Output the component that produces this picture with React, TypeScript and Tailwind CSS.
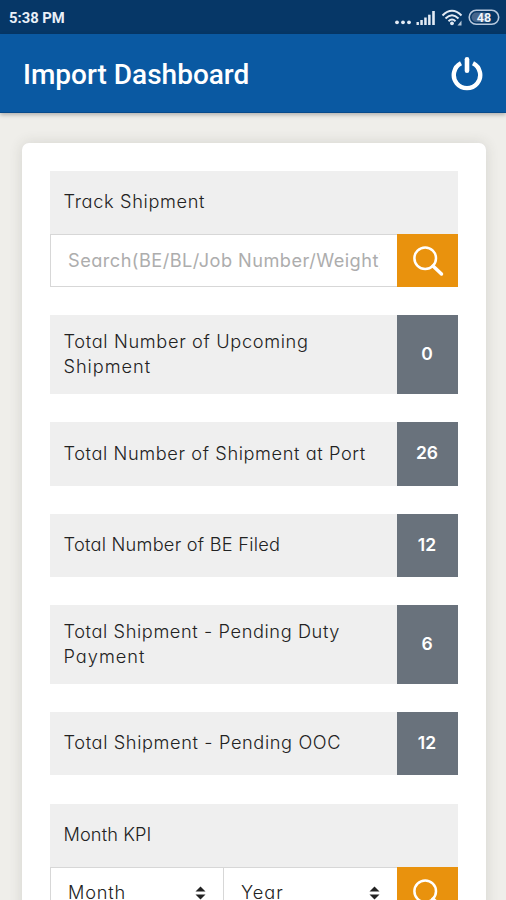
import React from "react";

type Line = { text: string; tracking: string };
type Metric = { lines: Line[]; value: string; box: string };

const metrics: Metric[] = [
  {
    lines: [
      { text: "Total Number of Upcoming", tracking: "tracking-[0.66px]" },
      { text: "Shipment", tracking: "tracking-[0.95px]" },
    ],
    value: "0",
    box: "mt-[28px] h-[79px]",
  },
  { lines: [{ text: "Total Number of Shipment at Port", tracking: "tracking-[0.6px]" }], value: "26", box: "mt-[28px] h-[64px]" },
  { lines: [{ text: "Total Number of BE Filed", tracking: "tracking-[0.25px]" }], value: "12", box: "mt-[28px] h-[63px]" },
  {
    lines: [
      { text: "Total Shipment - Pending Duty", tracking: "tracking-[0.6px]" },
      { text: "Payment", tracking: "tracking-[1px]" },
    ],
    value: "6",
    box: "mt-[28px] h-[79px]",
  },
  { lines: [{ text: "Total Shipment - Pending OOC", tracking: "tracking-[0.62px]" }], value: "12", box: "mt-[28px] h-[63px]" },
];

function StatusIcons() {
  return (
    <svg className="mt-[2px]" width="108" height="20" viewBox="0 0 108 20" fill="none">
      <g fill="#e3ebf5">
        <circle cx="5" cy="14.3" r="1.9" />
        <circle cx="11" cy="14.3" r="1.9" />
        <circle cx="17" cy="14.3" r="1.9" />
        <rect x="24.5" y="14" width="2.4" height="3" />
        <rect x="28.3" y="12" width="2.5" height="5" />
        <rect x="32.2" y="9.5" width="2.5" height="7.5" />
        <rect x="36.1" y="6.7" width="2.5" height="10.3" />
        <rect x="40.2" y="3" width="2.6" height="14" />
        <circle cx="60" cy="15.3" r="1.9" />
        <path d="M69.5 12.5V17.5H65.5Z" opacity="0.8" />
      </g>
      <g stroke="#e3ebf5" strokeWidth="2">
        <path d="M50.500 7.500Q60 -2 69.500 7.500" />
        <path d="M53.500 10.500Q60 4 66.500 10.500" />
        <path d="M56.500 13.200Q60 9.800 63.500 13.200" />
      </g>
      <rect x="77.200" y="2.300" width="29.500" height="14" rx="7" stroke="#b9c9de" strokeWidth="1.600" />
      <rect x="79.500" y="4.500" width="17" height="9.600" rx="4.800" fill="#47668c" />
      <text x="92" y="13.700" textAnchor="middle" fontFamily="Roboto, sans-serif" fontSize="12.500" fontWeight="700" fill="#f0f5fc">48</text>
    </svg>
  );
}

function PowerIcon() {
  return (
    <svg className="mt-[2px]" width="32" height="34" viewBox="0 0 32 34" fill="none" stroke="#fff">
      <path d="M10 6.200A13.200 13.200 0 1 0 22 6.200" strokeWidth="4.400" />
      <path d="M16 2.300V13.700" strokeWidth="4.600" strokeLinecap="round" />
    </svg>
  );
}

function SearchButton() {
  return (
    <button className="flex w-[61px] shrink-0 items-center justify-center bg-[#e9920d]">
      <svg width="32" height="32" viewBox="0 0 32 32" fill="none" stroke="#fff">
        <circle cx="13.200" cy="13.200" r="10.800" strokeWidth="2.500" />
        <path d="M21 21L29.500 29" strokeWidth="3.500" strokeLinecap="round" />
      </svg>
    </button>
  );
}

function Sorter() {
  return (
    <svg width="11" height="14" viewBox="0 0 11 14" fill="#222">
      <path d="M0.500 5.500L5.500 0.500L10.500 5.500Z" />
      <path d="M0.500 8.500L5.500 13.500L10.500 8.500Z" />
    </svg>
  );
}

function SectionTitle({ children, className }: { children: string; className: string }) {
  return <h2 className={"flex h-[63px] items-center bg-[#efefef] pb-[2px] pl-[13.5px] " + className}>{children}</h2>;
}

function Select({ label, className }: { label: string; className: string }) {
  return (
    <div className={"flex items-center justify-between border-y border-l border-[#d7d7d7] bg-white pb-px pl-[17px] pr-[17px] " + className}>
      <span className="pb-[2px]">{label}</span>
      <Sorter />
    </div>
  );
}

export default function App() {
  return (
    <div className="flex h-[900px] w-[506px] flex-col overflow-hidden bg-[#efeeea] font-['Inter',sans-serif]">
      <div className="flex h-[34px] shrink-0 items-center justify-between bg-[#063767] pl-[9px] pr-[6px] text-white">
        <span className="pt-[2px] font-['Roboto',sans-serif] text-[14.8px] font-bold text-[#e9f0f8]">5:38 PM</span>
        <StatusIcons />
      </div>
      <header className="z-10 flex h-[79px] shrink-0 items-center justify-between border-b border-[#074a8b] bg-[#0a59a2] pl-[23px] pr-[23px] shadow-[0_2px_4px_rgba(0,0,0,0.25)]">
        <h1 className="pt-[4px] font-['Roboto',sans-serif] text-[28px] font-medium text-white">Import Dashboard</h1>
        <PowerIcon />
      </header>
      <main className="ml-[22px] mt-[30px] h-[850px] w-[464px] shrink-0 rounded-[7px] bg-white px-[28px] pt-[28px] text-[18.2px] font-light leading-[25px] text-[#222] shadow-[0_0_14px_rgba(60,60,40,0.14)] [font-feature-settings:'cv11']">
        <SectionTitle className="tracking-[0.65px]">Track Shipment</SectionTitle>
        <div className="flex h-[53px]">
          <div className="flex min-w-0 flex-1 items-center border border-r-0 border-[#d7d7d7] pb-px pl-[17px] pr-[17px]">
            <span className="overflow-hidden whitespace-nowrap font-normal tracking-[0.46px] text-[#adadad]">Search(BE/BL/Job Number/Weight)</span>
          </div>
          <SearchButton />
        </div>
        {metrics.map((m, i) => (
          <div key={i} className={"flex " + m.box}>
            <div className="flex flex-1 flex-col justify-center bg-[#efefef] pb-[2px] pl-[13.5px]">
              {m.lines.map((l) => (
                <span key={l.text} className={"whitespace-nowrap " + l.tracking}>{l.text}</span>
              ))}
            </div>
            <div className="flex w-[61px] items-center justify-center bg-[#69727c] pb-[3px] pr-px text-[17.5px] font-semibold text-white">{m.value}</div>
          </div>
        ))}
        <div className="mt-[29px]">
          <SectionTitle className="tracking-[0.1px]">Month KPI</SectionTitle>
          <div className="flex h-[53px]">
            <Select label="Month" className="w-[173px] tracking-[0.8px]" />
            <Select label="Year" className="flex-1 tracking-[1px]" />
            <SearchButton />
          </div>
        </div>
      </main>
    </div>
  );
}
